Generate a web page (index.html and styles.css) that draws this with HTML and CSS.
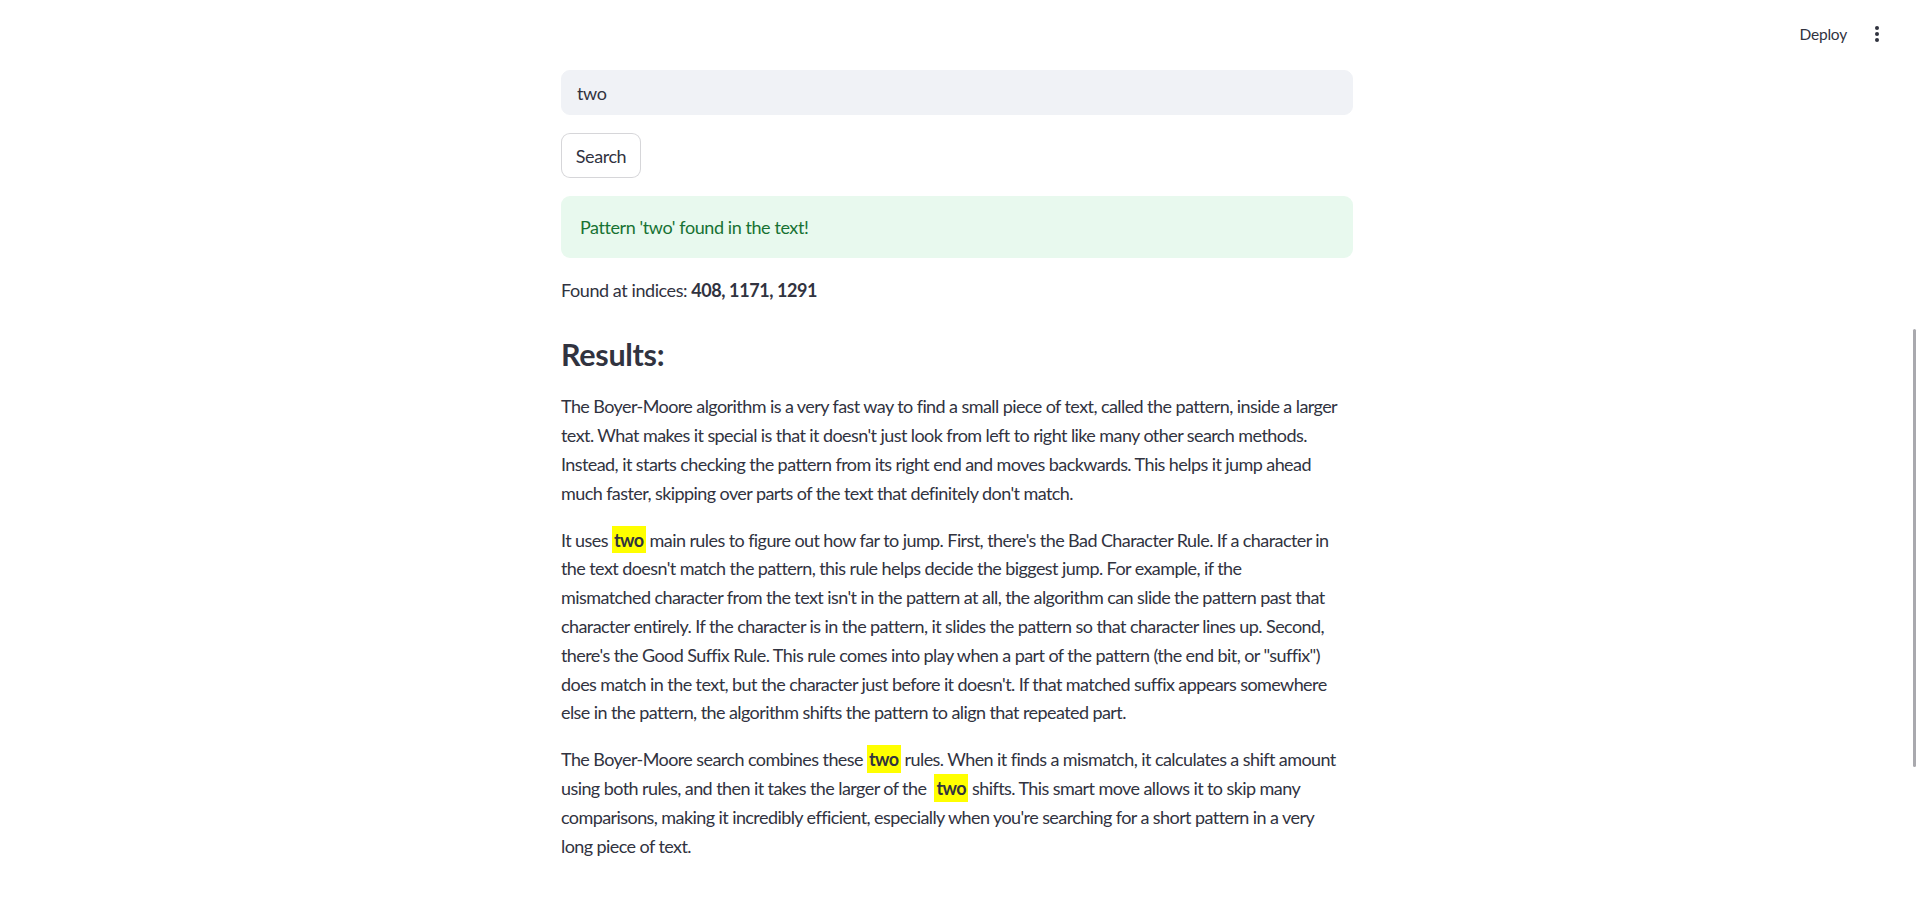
FILE: index.html
```html
<!DOCTYPE html>
<html lang="en">
<head>
<meta charset="utf-8">
<title>Boyer-Moore Search</title>
<link rel="stylesheet" href="styles.css">
</head>
<body>
<header class="app-header">
  <button class="deploy-btn" type="button">Deploy</button>
  <button class="menu-btn" type="button" aria-label="Main menu">
    <svg width="4" height="16" viewBox="0 0 4 16" aria-hidden="true"><circle cx="2" cy="2" r="2"/><circle cx="2" cy="8" r="2"/><circle cx="2" cy="14" r="2"/></svg>
  </button>
</header>
<main class="main">
  <div class="block">
    <div class="text-input"><input class="input" type="text" value="two"></div>
    <div><button class="search-btn" type="button">Search</button></div>
    <div class="alert-success">Pattern 'two' found in the text!</div>
    <div class="markdown"><p>Found at indices: <strong>408, 1171, 1291</strong></p></div>
    <h3 class="results-heading">Results:</h3>
    <div class="markdown result-text">
      <p>The Boyer-Moore algorithm is a very fast way to find a small piece of text, called the pattern, inside a larger<br>text. What makes it special is that it doesn't just look from left to right like many other search methods.<br>Instead, it starts checking the pattern from its right end and moves backwards. This helps it jump ahead<br>much faster, skipping over parts of the text that definitely don't match.</p>
      <p>It uses <span class="hl">two</span> main rules to figure out how far to jump. First, there's the Bad Character Rule. If a character in<br>the text doesn't match the pattern, this rule helps decide the biggest jump. For example, if the<br>mismatched character from the text isn't in the pattern at all, the algorithm can slide the pattern past that<br>character entirely. If the character is in the pattern, it slides the pattern so that character lines up. Second,<br>there's the Good Suffix Rule. This rule comes into play when a part of the pattern (the end bit, or "suffix")<br>does match in the text, but the character just before it doesn't. If that matched suffix appears somewhere<br>else in the pattern, the algorithm shifts the pattern to align that repeated part.</p>
      <p>The Boyer-Moore search combines these <span class="hl">two</span> rules. When it finds a mismatch, it calculates a shift amount<br>using both rules, and then it takes the larger of the &nbsp;<span class="hl">two</span> shifts. This smart move allows it to skip many<br>comparisons, making it incredibly efficient, especially when you're searching for a short pattern in a very<br>long piece of text.</p>
    </div>
  </div>
</main>
<div class="scroll-thumb"></div>
</body>
</html>
```
FILE: styles.css
```css
* { box-sizing: border-box; }

html, body {
  margin: 0;
  padding: 0;
  background: #ffffff;
}

body {
  font-family: Lato, "Open Sans", sans-serif;
  color: rgb(49, 51, 63);
  font-size: 18px;
  line-height: 28.8px;
  letter-spacing: -0.42px;
  height: 903px;
  overflow: hidden;
}

.app-header {
  height: 68px;
  display: flex;
  justify-content: flex-end;
  align-items: center;
  padding-right: 23px;
}

.deploy-btn {
  font-family: inherit;
  font-size: 15.5px;
  letter-spacing: -0.2px;
  color: rgb(49, 51, 63);
  background: transparent;
  border: none;
  padding: 4px 13px;
  height: 36px;
  cursor: pointer;
}

.menu-btn {
  width: 34px;
  height: 36px;
  display: flex;
  align-items: center;
  justify-content: center;
  background: transparent;
  border: none;
  padding: 0;
  fill: rgb(49, 51, 63);
}

.main {
  display: flex;
  justify-content: center;
  padding-top: 2px;
  padding-right: 3px;
}

.block {
  width: 792px;
  display: flex;
  flex-direction: column;
  gap: 18px;
}

.input {
  width: 100%;
  height: 45px;
  border: 1px solid #f0f2f6;
  border-radius: 9px;
  background: #f0f2f6;
  padding: 0 15px;
  font-family: inherit;
  font-size: 18px;
  letter-spacing: -0.42px;
  color: rgb(49, 51, 63);
  outline: none;
}

.search-btn {
  height: 45px;
  padding: 0 13px;
  width: 80px;
  border: 1px solid rgba(49, 51, 63, 0.2);
  border-radius: 9px;
  background: #ffffff;
  font-family: inherit;
  font-size: 18px;
  letter-spacing: -0.42px;
  color: rgb(49, 51, 63);
}

.alert-success {
  background: #e8f9ee;
  color: rgb(23, 114, 51);
  border-radius: 9px;
  padding: 16.6px 19px;
}

.markdown p {
  margin: 0 0 18px;
}

.markdown p:last-child {
  margin-bottom: 0;
}

.markdown strong {
  font-weight: 700;
}

.result-text p {
  white-space: nowrap;
  letter-spacing: -0.58px;
}

.results-heading {
  margin: 0;
  padding: 13px 0 2px;
  font-size: 30.5px;
  line-height: 1.2;
  font-weight: 700;
  letter-spacing: -0.3px;
}

.hl {
  background: #ffff00;
  box-shadow: 0 0 0 2px #ffff00;
  padding: 0.7px 0;
  margin: 0 2px;
  font-weight: 700;
}

.scroll-thumb {
  position: absolute;
  top: 329px;
  right: 1px;
  width: 3px;
  height: 438px;
  border-radius: 2px;
  background: #a9a9ae;
}
```
